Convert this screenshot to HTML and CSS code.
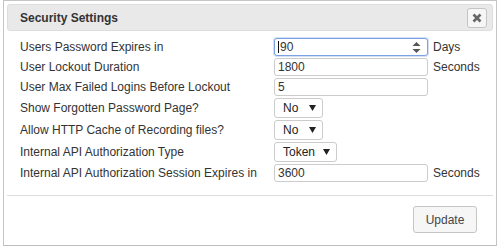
FILE: index.html
```html
<!DOCTYPE html>
<html>
<head>
<meta charset="utf-8">
<link rel="stylesheet" href="styles.css">
</head>
<body>
<div class="dialog">
  <div class="titlebar">
    <span class="title">Security Settings</span>
    <button class="close" type="button">
      <svg width="10" height="10" viewBox="0 0 10 10"><path d="M1.5 1.5 L8.5 8.5 M8.5 1.5 L1.5 8.5" stroke="#666" stroke-width="2.6" stroke-linecap="butt"/></svg>
    </button>
  </div>
  <div class="content">
    <div class="row">
      <span class="label">Users Password Expires in</span>
      <span class="field focused">
        <span class="caret"></span>
        <input class="input input-focus" type="text" value="90">
        <svg class="spin" width="9" height="11" viewBox="0 0 9 11"><path d="M4.5 0 L8.5 4 L0.5 4 Z M4.5 11 L8.5 7 L0.5 7 Z" fill="#555"/></svg>
      </span>
      <span class="unit">Days</span>
    </div>
    <div class="row">
      <span class="label">User Lockout Duration</span>
      <span class="field"><input class="input" type="text" value="1800"></span>
      <span class="unit">Seconds</span>
    </div>
    <div class="row">
      <span class="label">User Max Failed Logins Before Lockout</span>
      <span class="field"><input class="input" type="text" value="5"></span>
    </div>
    <div class="row row-sel">
      <span class="label">Show Forgotten Password Page?</span>
      <span class="select sel-short"><span>No</span><svg width="7" height="6" viewBox="0 0 7 6"><path d="M0 0 L7 0 L3.5 6 Z" fill="#222"/></svg></span>
    </div>
    <div class="row row-sel">
      <span class="label">Allow HTTP Cache of Recording files?</span>
      <span class="select sel-short"><span>No</span><svg width="7" height="6" viewBox="0 0 7 6"><path d="M0 0 L7 0 L3.5 6 Z" fill="#222"/></svg></span>
    </div>
    <div class="row row-sel">
      <span class="label">Internal API Authorization Type</span>
      <span class="select sel-long"><span>Token</span><svg width="7" height="6" viewBox="0 0 7 6"><path d="M0 0 L7 0 L3.5 6 Z" fill="#222"/></svg></span>
    </div>
    <div class="row">
      <span class="label">Internal API Authorization Session Expires in</span>
      <span class="field"><input class="input" type="text" value="3600"></span>
      <span class="unit">Seconds</span>
    </div>
  </div>
  <div class="buttonpane">
    <button class="btn" type="button">Update</button>
  </div>
</div>
</body>
</html>
```
FILE: styles.css
```css
html, body {
  margin: 0;
  padding: 0;
  background: #ffffff;
}
body {
  font-family: "Liberation Sans", Arial, sans-serif;
  font-size: 12px;
  color: #333333;
}
.dialog {
  box-sizing: border-box;
  width: 494px;
  margin: 0 0 0 3px;
  border: 1px solid #c5c5c5;
  border-bottom-color: #bdbdbd;
  padding: 3px;
  background: #ffffff;
}
.titlebar {
  box-sizing: border-box;
  height: 27px;
  border: 1px solid #dddddd;
  border-radius: 3px;
  background: #e9e9e9;
  display: flex;
  align-items: center;
  justify-content: space-between;
  padding: 0 5px 0 12px;
}
.title {
  font-weight: bold;
  font-size: 12px;
  color: #333333;
  line-height: 14px;
}
.close {
  box-sizing: border-box;
  width: 20px;
  height: 20px;
  margin: 0;
  padding: 0;
  border: 1px solid #c5c5c5;
  border-radius: 3px;
  background: #f6f6f6;
  display: flex;
  align-items: center;
  justify-content: center;
}
.content {
  padding: 6px 0 12px 13px;
}
.row {
  display: flex;
  align-items: center;
  height: 20px;
}
.row-sel {
  height: 22px;
}
.label {
  width: 254px;
  flex: none;
  line-height: 14px;
  white-space: nowrap;
}
.field {
  position: relative;
  display: block;
  width: 154px;
  height: 18px;
}
.input {
  box-sizing: border-box;
  width: 154px;
  height: 18px;
  margin: 0;
  border: 1px solid #cccccc;
  border-radius: 3px;
  padding: 0 3px;
  font-family: "Liberation Sans", Arial, sans-serif;
  font-size: 12px;
  color: #333333;
  background: #ffffff;
  outline: none;
  display: block;
}
.input-focus {
  border-color: #7da2e3;
  box-shadow: 0 0 0 1px #d3e0f7;
  padding-left: 5px;
}
.caret {
  position: absolute;
  left: 4px;
  top: 3px;
  width: 1px;
  height: 12px;
  background: #111111;
  z-index: 2;
}
.spin {
  position: absolute;
  right: 7px;
  top: 4px;
}
.unit {
  margin-left: 5px;
  line-height: 14px;
}
.select {
  box-sizing: border-box;
  height: 20px;
  border: 1px solid #cccccc;
  border-radius: 3px;
  background: #ffffff;
  display: flex;
  align-items: center;
  justify-content: space-between;
  padding: 0 6px 0 8px;
  color: #222222;
  line-height: 14px;
}
.sel-short {
  width: 49px;
}
.sel-long {
  width: 63px;
}
.buttonpane {
  border-top: 1px solid #dddddd;
  padding: 10px 16px 9px 0;
  display: flex;
  justify-content: flex-end;
}
.btn {
  box-sizing: border-box;
  width: 64px;
  height: 27px;
  margin: 0;
  padding: 0;
  border: 1px solid #c5c5c5;
  border-radius: 3px;
  background: #f6f6f6;
  font-family: "Liberation Sans", Arial, sans-serif;
  font-size: 12px;
  color: #454545;
}
```
